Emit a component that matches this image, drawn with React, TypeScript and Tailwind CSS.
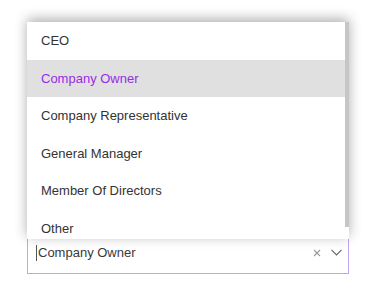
import { useState } from "react";

const options = [
  "CEO",
  "Company Owner",
  "Company Representative",
  "General Manager",
  "Member Of Directors",
  "Other",
];

export default function App() {
  const [selected] = useState("Company Owner");

  return (
    <div className="min-h-[286px] w-[366px] bg-white pl-[27px] pt-[238px] font-['Liberation_Sans',Arial,sans-serif] text-[13px]">
      <div className="relative w-[322px]">
        {/* Dropdown list */}
        <div className="absolute bottom-full left-0 z-10 h-[217px] w-[322px] translate-y-[1px] overflow-hidden bg-white shadow-[0_-3px_12px_rgba(0,0,0,0.32)]">
          {options.map((opt) => (
            <div
              key={opt}
              className={`flex h-[37.5px] items-center pl-[14px] ${
                opt === selected ? "bg-[#e0e0e0] text-[#9a2be6]" : "text-[#333333]"
              }`}
            >
              {opt}
            </div>
          ))}
          {/* Scrollbar thumb */}
          <div className="absolute right-0 top-0 h-[205px] w-[4px] bg-[#c6c6c6]" />
        </div>

        {/* Input */}
        <div className="flex h-[36px] items-center border border-[#c2a3ee] pb-[7px] pl-[8px] pr-[6px] text-[#3a3a3a]">
          <span className="mr-[1px] h-[16px] w-[1px] bg-[#555555]" />
          <span className="flex-1">{selected}</span>
          <svg width="8" height="8" viewBox="0 0 8 8" className="mr-[10px]">
            <path d="M1 1L7 7M7 1L1 7" stroke="#9a9a9a" strokeWidth="1.1" />
          </svg>
          <svg width="11" height="7" viewBox="0 0 11 7">
            <path d="M0.5 0.8L5.5 5.8L10.5 0.8" stroke="#666666" strokeWidth="1.2" fill="none" />
          </svg>
        </div>
      </div>
    </div>
  );
}
